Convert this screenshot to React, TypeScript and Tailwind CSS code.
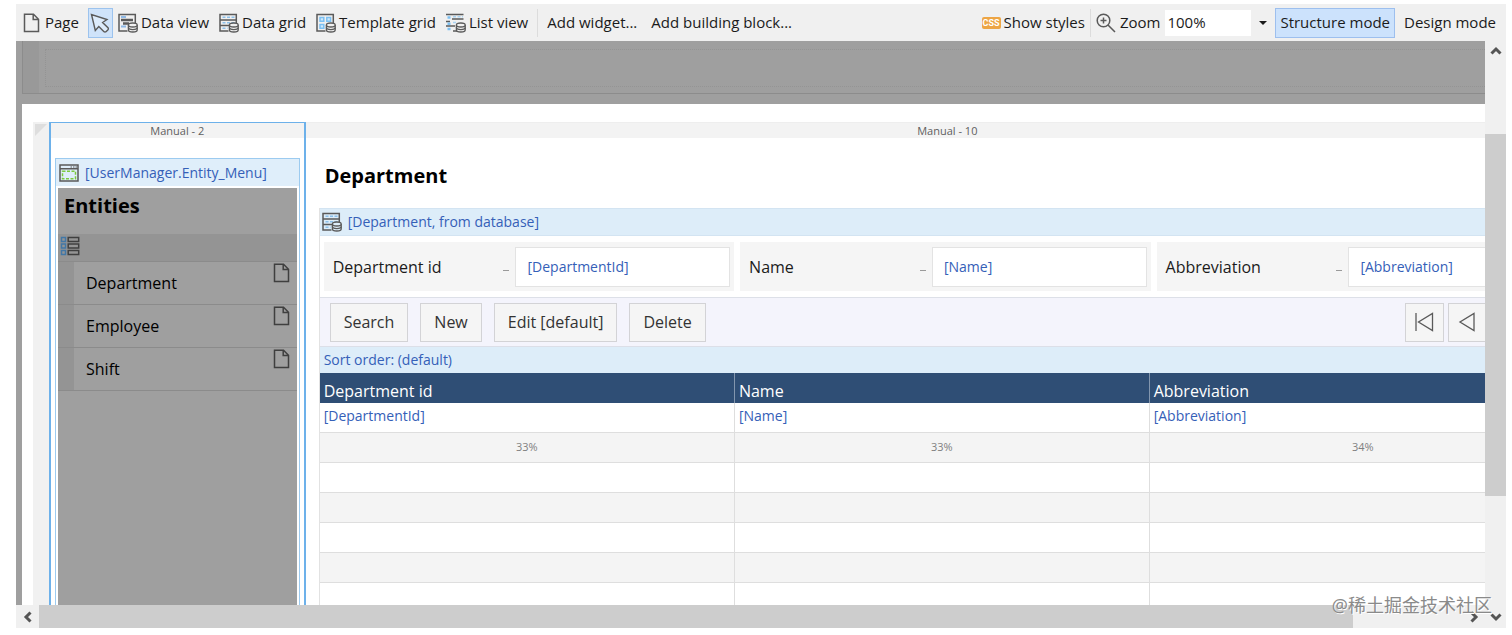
import type { ReactNode } from "react";
import clsx from "clsx";

const menuItems = ["Department", "Employee", "Shift"];

const columns = [
  { caption: "Department id", attribute: "[DepartmentId]", width: "33%" },
  { caption: "Name", attribute: "[Name]", width: "33%" },
  { caption: "Abbreviation", attribute: "[Abbreviation]", width: "34%" },
];

const emptyRows = [0, 1, 2, 3, 4];

/* ---------- icons ---------- */

function Icon({ children, className }: { children: ReactNode; className?: string }) {
  return (
    <svg
      viewBox="0 0 20 20"
      fill="none"
      stroke="#5a5a5a"
      strokeWidth="1.5"
      aria-hidden="true"
      className={clsx("size-5 shrink-0", className)}
    >
      {children}
    </svg>
  );
}

function PageIcon({ className }: { className?: string }) {
  return (
    <Icon className={className}>
      <path d="M2.5 1.2h9l5 5v12.3h-14zM11.2 1.5v5h5" />
    </Icon>
  );
}

function Cylinder({ fill = "#f0f0f0" }: { fill?: string }) {
  return (
    <g fill={fill} strokeWidth="1.3">
      <path d="M10.4 12v5c0 1.1 2 2 4.4 2s4.4-.9 4.4-2v-5" />
      <path d="M10.4 14.6c0 1.1 2 2 4.4 2s4.4-.9 4.4-2" fill="none" />
      <ellipse cx="14.8" cy="12" rx="4.4" ry="2" />
    </g>
  );
}

function DataViewIcon() {
  return (
    <Icon>
      <path d="M9.5 18H1V1.5h16.300V10" />
      <path d="M3 4h5" stroke="#8fb9e6" strokeWidth="2" />
      <path d="M3 7h12M5 10.500h6" strokeWidth="2.400" />
      <path d="M3 13.500h5" stroke="#8fb9e6" strokeWidth="2" />
      <Cylinder />
    </Icon>
  );
}

function DataGridIcon({ fill }: { fill?: string }) {
  return (
    <Icon>
      <path d="M9.5 18H1V1.5h16.300V10M1 7h16.300M1 12.500h9" />
      <path d="M3.500 4.300h12M3.500 9.800h12M3.500 15.300h5" stroke="#8cc0ea" strokeDasharray="3 1.500" />
      <Cylinder fill={fill} />
    </Icon>
  );
}

function TemplateGridIcon() {
  return (
    <Icon>
      <path d="M9.5 18H1V1.500h16.300V10" />
      <path
        d="M4 4.500h3.800v3.800H4zM10.800 4.500h3.800v3.800h-3.800zM4 11.500h3.800v3.800H4z"
        stroke="#7cc0f2"
        fill="#cfe9fb"
      />
      <Cylinder />
    </Icon>
  );
}

function ListViewIcon() {
  return (
    <Icon>
      <path d="M0 1.500h17.500M6 6h11.500M0 8.500h4M0 13h9M7 18h4" />
      <path d="M1.500 4.500h3M1.500 10.700h3M1.500 16h3" stroke="#7cc0f2" strokeWidth="2.500" />
      <path d="M7 3.800h10M7 9.500h4" stroke="#a9d3f2" strokeDasharray="3 1.500" />
      <Cylinder />
    </Icon>
  );
}

function CursorIcon() {
  return (
    <Icon>
      <path
        d="M1.500 1.500l3.800 16 3.500-4 5.200 5.200q1 .7 2 0l2-2q.7-1 0-2l-5.400-5.200 4.400-3z"
        strokeWidth="1.400"
        fill="#dcebfb"
      />
    </Icon>
  );
}

function ZoomIcon() {
  return (
    <Icon>
      <circle cx="7.500" cy="7.500" r="6.300" />
      <path d="M12 12l7 7M7.500 4.500v6M4.500 7.500h6" />
    </Icon>
  );
}

function SnippetIcon() {
  return (
    <Icon>
      <path d="M1 2h18v16H1zM1 5.800h18" />
      <path d="M11.500 4H13M14 4h1.500M16.500 4H18" strokeWidth="1" />
      <path d="M3.500 8.300h13v7.500h-13z" stroke="#7cc93f" strokeDasharray="3 1.500" />
    </Icon>
  );
}

function NavListIcon() {
  return (
    <Icon>
      <path d="M1.500 1.500h4v4h-4zM1.500 8h4v4h-4zM1.500 14.500h4v4h-4z" stroke="#4277a6" />
      <path d="M8.200 1.500h10.500v4H8.200zM8.200 8h10.500v4H8.200zM8.200 14.500h10.500v4H8.200z" stroke="#3f3f3f" />
    </Icon>
  );
}

function Chevron({ className }: { className?: string }) {
  return (
    <svg
      viewBox="0 0 12 12"
      fill="none"
      stroke="#555"
      strokeWidth="3"
      aria-hidden="true"
      className={clsx("size-3", className)}
    >
      <path d="M1.500 8.500L6 4l4.500 4.500" />
    </svg>
  );
}

/* ---------- toolbar ---------- */

function ToolButton({ icon, children }: { icon?: ReactNode; children: ReactNode }) {
  return (
    <button className="flex h-[30px] items-center gap-[3px] px-[5px]">
      {icon}
      {children}
    </button>
  );
}

function Separator() {
  return <span className="h-7 w-px bg-[#dcdcdc]" />;
}

function Toolbar() {
  return (
    <div className="flex h-[37px] shrink-0 items-center justify-between bg-[#f0f0f0] px-[5px] pl-px text-[15px] whitespace-nowrap text-[#1b1b1b]">
      <div className="flex items-center">
        <ToolButton icon={<PageIcon />}>Page</ToolButton>
        <button
          aria-label="Select"
          className="ml-1 flex h-[30px] w-[25px] items-center justify-center border border-[#9cc3ee] bg-[#cfe3fa]"
        >
          <CursorIcon />
        </button>
        <ToolButton icon={<DataViewIcon />}>Data view</ToolButton>
        <ToolButton icon={<DataGridIcon />}>Data grid</ToolButton>
        <ToolButton icon={<TemplateGridIcon />}>Template grid</ToolButton>
        <ToolButton icon={<ListViewIcon />}>List view</ToolButton>
        <div className="ml-1 flex items-center gap-1">
          <Separator />
          <ToolButton>Add widget...</ToolButton>
          <ToolButton>Add building block...</ToolButton>
        </div>
      </div>
      <div className="flex items-center">
        <ToolButton
          icon={
            <span className="rounded-xs bg-[#eda545] px-px font-['Roboto'] text-[9px] leading-3 font-bold text-white">
              CSS
            </span>
          }
        >
          Show styles
        </ToolButton>
        <Separator />
        <label htmlFor="zoom" className="flex items-center gap-1 px-[5px]">
          <ZoomIcon />
          Zoom
        </label>
        <select id="zoom" className="h-[26px] w-[86px] appearance-none bg-white px-0.5">
          <option>100%</option>
        </select>
        <svg viewBox="0 0 8 4" aria-hidden="true" className="mx-2 h-1 w-2">
          <path d="M0 0h8L4 4z" fill="#1b1b1b" />
        </svg>
        <button className="mr-1 h-[30px] border border-[#9dbfee] bg-[#cce2fc] px-1">Structure mode</button>
        <ToolButton>Design mode</ToolButton>
      </div>
    </div>
  );
}

/* ---------- page canvas ---------- */

function ColumnHeader({ children }: { children: ReactNode }) {
  return (
    <div className="h-[15px] bg-[#f3f3f3] text-center text-[11px] leading-[15px] text-[#5f5f5f]">{children}</div>
  );
}

function EntityMenu() {
  return (
    <div className="col-span-2 flex flex-col border-x-2 border-t border-[#6db1ea]">
      <ColumnHeader>Manual - 2</ColumnHeader>
      <div className="mx-1 mt-5 flex flex-1 flex-col border border-b-0 border-[#9ccbf0]">
        <div className="flex h-[27px] items-center gap-1.5 bg-[#dfeefa] px-[3px] text-sm text-[#3560b8]">
          <SnippetIcon />
          [UserManager.Entity_Menu]
        </div>
        <div className="mx-0.5 mt-0.5 flex-1 bg-[#9f9f9f]">
          <h2 className="h-[46px] px-1.5 pt-1 text-xl leading-7 font-bold text-black">Entities</h2>
          <div className="h-7 border-b border-[#8b8b8b] bg-[#949494] px-0.5 pt-0.5">
            <NavListIcon />
          </div>
          <ul className="text-base text-black">
            {menuItems.map((item) => (
              <li key={item} className="flex h-[43px] items-stretch border-b border-[#8b8b8b]">
                <span className="w-4 bg-[#949494]" />
                <span className="flex-1 self-center pl-3">{item}</span>
                <PageIcon className="mt-px mr-[5px] stroke-[#3f3f3f]" />
              </li>
            ))}
          </ul>
        </div>
      </div>
    </div>
  );
}

function SearchBar() {
  return (
    <div className="grid h-[62px] grid-cols-3 gap-1.5 border-b border-[#dde0e8] bg-white py-1.5 pr-2.5 pl-1">
      {columns.map((col) => (
        <div key={col.caption} className="flex items-center bg-[#f5f5f5] pr-1 pl-[9px]">
          <label htmlFor={col.attribute} className="flex-1 text-base text-[#1b1b1b]">
            {col.caption}
          </label>
          <span className="mt-2 mr-1.5 w-1.5 border-b border-dashed border-[#9a9a9a]" />
          <input
            id={col.attribute}
            readOnly
            value={col.attribute}
            className="h-10 w-[54%] border border-[#e3e3e3] bg-white px-[11px] text-sm text-[#3560b8]"
          />
        </div>
      ))}
    </div>
  );
}

function PagerButton({ label, path }: { label: string; path: string }) {
  return (
    <button
      aria-label={label}
      className="flex size-[39px] items-center justify-center border border-[#d3d3d6] bg-[#f5f5f5]"
    >
      <Icon>
        <path d={path} strokeWidth="1.300" />
      </Icon>
    </button>
  );
}

function ControlBar() {
  return (
    <div className="flex h-[49px] items-center justify-between border-b border-[#dcdfe8] bg-[#f4f4fc] pr-1 pl-2.5">
      <div className="flex gap-3 text-base text-[#333]">
        {["Search", "New", "Edit [default]", "Delete"].map((action) => (
          <button key={action} className="h-[39px] border border-[#d3d3d6] bg-[#f5f5f5] px-[13px]">
            {action}
          </button>
        ))}
      </div>
      <div className="flex gap-1">
        <PagerButton label="First" path="M2 1v18M18.500 1.500v17L4.500 10z" />
        <PagerButton label="Previous" path="M17 1.500v17L3 10z" />
        <PagerButton label="Next" path="M3 1.500v17L17 10z" />
        <PagerButton label="Last" path="M18 1v18M1.500 1.500v17L15.500 10z" />
      </div>
    </div>
  );
}

function DepartmentGrid() {
  return (
    <div className="border-l border-[#e2e2e2]">
      <div className="flex h-7 items-center gap-1.5 border-y border-[#d3e4f2] bg-[#ddedf9] px-0.5 text-sm text-[#3560b8]">
        <DataGridIcon fill="#ddedf9" />
        [Department, from database]
      </div>
      <SearchBar />
      <ControlBar />
      <div className="h-[26px] bg-[#ddedf9] px-1 text-sm leading-[26px] text-[#3560b8]">Sort order: (default)</div>
      <table className="w-full table-fixed border-collapse">
        <colgroup>
          <col className="w-[33%]" />
          <col className="w-[33%]" />
          <col className="w-[34%]" />
        </colgroup>
        <thead>
          <tr className="h-[30px] bg-[#2f4e75] text-left text-base text-white">
            {columns.map((col) => (
              <th key={col.caption} className="border-r border-[#8396ae] px-1 pt-1.5 leading-6 font-normal">
                {col.caption}
              </th>
            ))}
          </tr>
        </thead>
        <tbody>
          <tr className="h-[29px] text-sm text-[#3560b8]">
            {columns.map((col) => (
              <td key={col.caption} className="border-r border-[#dedede] px-1 pb-0.5">
                {col.attribute}
              </td>
            ))}
          </tr>
          <tr className="h-[30px] bg-[#f4f4f4] text-center text-[11px] text-[#808080]">
            {columns.map((col) => (
              <td key={col.caption} className="border border-l-0 border-[#dedede]">
                {col.width}
              </td>
            ))}
          </tr>
          {emptyRows.map((row) => (
            <tr key={row} className="h-[30px] odd:bg-white even:bg-[#f4f4f4]">
              {columns.map((col) => (
                <td key={col.caption} className="border border-l-0 border-[#dedede]" />
              ))}
            </tr>
          ))}
        </tbody>
      </table>
    </div>
  );
}

function Canvas() {
  return (
    <div className="flex min-h-0 flex-1 flex-col overflow-hidden bg-[#9f9f9f] pl-1.5">
      <div className="mb-2.5 flex h-[53px] shrink-0 border-b border-l border-[#8c8c8c]">
        <div className="w-4 bg-[#999]" />
        <div className="mt-2 mb-1.5 ml-1.5 flex-1 border border-r-0 border-dotted border-[#949494]" />
      </div>
      <div className="flex min-h-0 flex-1 bg-white pt-[18px] pl-[11px]">
        <div className="flex w-full min-w-[1556px]">
          <div className="w-4 shrink-0 bg-[#f1f1f1]">
            <svg viewBox="0 0 12 12" aria-hidden="true" className="mt-0.5 ml-0.5 size-3">
              <path d="M0 0h12L0 12z" fill="#dedede" />
            </svg>
          </div>
          <div className="grid flex-1 grid-cols-12">
            <EntityMenu />
            <div className="col-span-10">
              <div className="h-px bg-[#eee]" />
              <ColumnHeader>Manual - 10</ColumnHeader>
              <div className="pr-3 pl-[13px]">
                <h1 className="px-1.5 pt-6 pb-[18px] text-xl leading-7 font-bold text-black">Department</h1>
                <DepartmentGrid />
              </div>
            </div>
          </div>
        </div>
      </div>
    </div>
  );
}

export default function App() {
  return (
    <div className="relative flex h-screen flex-col overflow-hidden bg-white pt-1 pr-1.5 pb-[7px] pl-4 font-['Open_Sans','Noto_Sans',sans-serif]">
      <Toolbar />
      <div className="flex min-h-0 flex-1">
        <div className="flex min-w-0 flex-1 flex-col">
          <Canvas />
          <div className="flex h-[23px] shrink-0 bg-[#f0f0f0]">
            <button aria-label="Scroll left" className="flex w-[23px] items-center justify-center">
              <Chevron className="-rotate-90" />
            </button>
            <div className="grow-12 bg-[#cdcdcd]" />
            <div className="grow" />
            <button aria-label="Scroll right" className="flex w-[23px] items-center justify-center">
              <Chevron className="rotate-90" />
            </button>
          </div>
        </div>
        <div className="flex w-[21px] shrink-0 flex-col bg-[#f0f0f0]">
          <button aria-label="Scroll up" className="flex h-5 items-center justify-center">
            <Chevron />
          </button>
          <div className="grow-2" />
          <div className="grow-10 bg-[#cdcdcd]" />
          <div className="grow-3" />
          <button aria-label="Scroll down" className="flex h-[23px] items-center justify-center">
            <Chevron className="rotate-180" />
          </button>
        </div>
      </div>
      <span className="absolute right-5 bottom-4 font-['Open_Sans','Noto_Sans_CJK_SC',sans-serif] text-lg leading-7 text-[#8a8a8a] text-shadow-[1px_1px_0_#fff]">
        @稀土掘金技术社区
      </span>
    </div>
  );
}
